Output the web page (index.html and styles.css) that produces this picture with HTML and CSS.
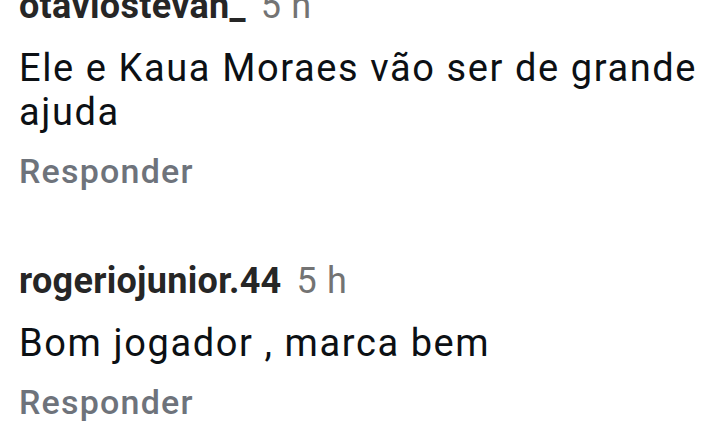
FILE: index.html
```html
<!DOCTYPE html>
<html lang="pt">
<head>
<meta charset="utf-8">
<link rel="stylesheet" href="styles.css">
</head>
<body>
<div class="list">
  <div class="comment">
    <div class="head"><span class="user">otaviostevan_</span><span class="time">5 h</span></div>
    <div class="text">Ele e Kaua Moraes vão ser de grande ajuda</div>
    <div class="reply">Responder</div>
  </div>
  <div class="comment">
    <div class="head"><span class="user">rogeriojunior.44</span><span class="time">5 h</span></div>
    <div class="text">Bom jogador , marca bem</div>
    <div class="reply">Responder</div>
  </div>
</div>
</body>
</html>
```
FILE: styles.css
```css
html, body {
  margin: 0;
  padding: 0;
  background: #ffffff;
}
body {
  font-family: Roboto, "Noto Sans", sans-serif;
  width: 724px;
  height: 428px;
  overflow: hidden;
}
.list {
  display: flex;
  flex-direction: column;
  gap: 66px;
  margin-top: -16px;
  padding: 0 0 0 19px;
}
.comment {
  display: flex;
  flex-direction: column;
}
.head {
  display: flex;
  align-items: baseline;
  gap: 15px;
  font-size: 36px;
  line-height: 44px;
  white-space: nowrap;
}
.user {
  font-weight: 700;
  letter-spacing: 0.3px;
  color: #262626;
}
.time {
  color: #737373;
  font-weight: 400;
  font-size: 36px;
  letter-spacing: 0.6px;
}
.text {
  margin-top: 18px;
  font-size: 38px;
  line-height: 44px;
  letter-spacing: 1.6px;
  color: #0c1014;
}
.reply {
  margin-top: 15px;
  font-size: 34px;
  line-height: 44px;
  font-weight: 500;
  letter-spacing: 1.2px;
  color: #6e737b;
}
```
